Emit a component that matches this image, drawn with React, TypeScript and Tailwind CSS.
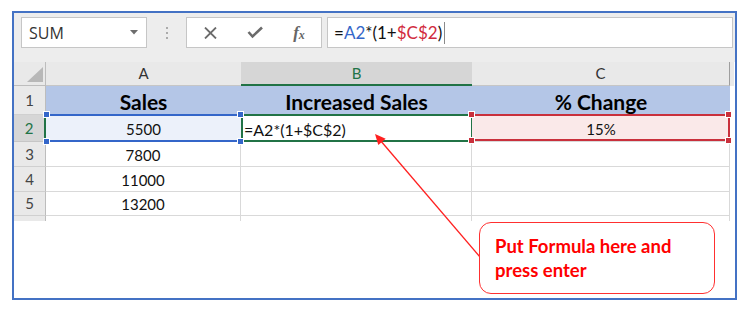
const GREEN = "#217346";

function Handle({ className }: { className: string }) {
  return <div className={`absolute z-10 w-[7px] h-[7px] border border-white ${className}`} />;
}

function RowHead({ n, active }: { n: string; active?: boolean }) {
  if (active) {
    return (
      <div className="w-[32px] shrink-0 flex items-center justify-center bg-[#d6d6d6] border-r-2 border-r-[#217346] border-b border-b-[#c6c6c6] text-[15px] text-[#217346]">
        {n}
      </div>
    );
  }
  return (
    <div className="w-[32px] shrink-0 flex items-center justify-center bg-[#e9e9e9] border-r border-r-[#bdbdbd] border-b border-b-[#d0d0d0] text-[15px] text-[#444]">
      {n}
    </div>
  );
}

function DataRow({ n, a, h }: { n: string; a: string; h: string }) {
  return (
    <div className={`flex ${h}`}>
      <RowHead n={n} />
      <div className="w-[195px] flex items-center justify-center pt-[2px] border-r border-b border-[#d9d9d9] text-[15px]">
        {a}
      </div>
      <div className="w-[231px] border-r border-b border-[#d9d9d9]" />
      <div className="w-[258px] border-r border-b border-[#d9d9d9]" />
    </div>
  );
}

export default function App() {
  return (
    <div className="relative w-[746px] h-[310px] bg-white pt-[11px] pl-[12px] font-[family-name:Lato,'Liberation_Sans',sans-serif] text-[#111]">
      <div className="w-[725px] h-[289px] border-2 border-[#4472c4] bg-white flex flex-col">
        {/* formula bar */}
        <div className="h-[49px] shrink-0 bg-[#ededed] flex items-start pt-[4px] pl-[7px] pr-[2px]">
          <div className="w-[126px] h-[31px] bg-white border border-[#c6c6c6] flex items-center justify-between pl-[7px] pr-[8px] font-[family-name:'Open_Sans',sans-serif] text-[16px] text-[#333]">
            <span>SUM</span>
            <svg width="8" height="5" viewBox="0 0 8 5">
              <path d="M0 0 L8 0 L4 4.5 Z" fill="#6d6d6d" />
            </svg>
          </div>
          <div className="w-[39px] h-[31px] flex flex-col items-center justify-center gap-[3px]">
            <span className="w-[2px] h-[2px] bg-[#ababab]" />
            <span className="w-[2px] h-[2px] bg-[#ababab]" />
            <span className="w-[2px] h-[2px] bg-[#ababab]" />
          </div>
          <div className="w-[136px] h-[31px] bg-white border border-[#c6c6c6] flex items-center">
            <div className="w-[46px] flex justify-center pl-[1px]">
              <svg width="13" height="12" viewBox="0 0 13 12">
                <path d="M1 0.5 L12 11.5 M12 0.5 L1 11.5" stroke="#6b6b6b" strokeWidth="1.8" />
              </svg>
            </div>
            <div className="w-[44px] flex justify-center">
              <svg width="16" height="13" viewBox="0 0 16 13">
                <path d="M1.5 6 L5.5 10.5 L15 1.5" stroke="#6b6b6b" strokeWidth="2.6" fill="none" />
              </svg>
            </div>
            <div className="w-[44px] flex justify-center font-[family-name:'Liberation_Serif',serif] italic font-bold text-[#666] text-[17px] leading-none">
              <span>f</span>
              <span className="text-[12px] mt-[5px]">x</span>
            </div>
          </div>
          <div className="ml-[5px] flex-1 h-[31px] bg-white border border-[#c6c6c6] flex items-center pl-[6px] text-[17px]">
            <span>=</span>
            <span className="text-[#3466c9]">A2</span>
            <span>*(1+</span>
            <span className="text-[#d12b3d]">$C$2</span>
            <span>)</span>
            <span className="ml-[2px] w-px h-[22px] bg-[#8a8a8a]" />
          </div>
        </div>

        {/* column headers */}
        <div className="flex h-[24px] text-[15px]">
          <div className="w-[32px] relative bg-[#e9e9e9] border-r border-b border-[#bdbdbd]">
            <svg className="absolute left-[13px] top-[5px]" width="16" height="15" viewBox="0 0 16 15">
              <path d="M16 0 L16 15 L0 15 Z" fill="#b8b8b8" />
            </svg>
          </div>
          <div className="w-[195px] flex items-center justify-center bg-[#e9e9e9] border-b border-b-[#c6c6c6] text-[#333]">A</div>
          <div className="w-[231px] flex items-center justify-center bg-[#d6d6d6] border-b-2 border-b-[#217346] text-[#217346]">B</div>
          <div className="w-[258px] flex items-center justify-center bg-[#e9e9e9] border-r border-r-[#9e9e9e] border-b border-b-[#c6c6c6] text-[#333]">C</div>
          <div className="w-[4px] bg-[#e9e9e9]" />
        </div>

        {/* row 1 */}
        <div className="flex h-[29px]">
          <RowHead n="1" />
          <div className="w-[684px] flex bg-[#b4c6e7] font-bold text-[21px] text-black">
            <div className="w-[195px] flex items-center justify-center pt-[2px]">Sales</div>
            <div className="w-[231px] flex items-center justify-center pt-[2px]">Increased Sales</div>
            <div className="w-[258px] flex items-center justify-center pt-[2px]">% Change</div>
          </div>
        </div>

        {/* row 2 */}
        <div className="flex h-[27px] text-[15px]">
          <RowHead n="2" active />
          <div className="relative w-[195px] flex items-center justify-center pt-[2px] bg-[#ecf1fa]">
            5500
            <div className="absolute left-0 right-0 top-[-1px] h-[2px] bg-[#3466c9]" />
            <div className="absolute left-0 right-0 bottom-0 h-[2px] bg-[#3466c9]" />
            <Handle className="bg-[#3466c9] left-[-3px] top-[-4px]" />
            <Handle className="bg-[#3466c9] left-[-3px] bottom-[-3px]" />
            <Handle className="bg-[#3466c9] right-[-3px] top-[-4px]" />
            <Handle className="bg-[#3466c9] right-[-3px] bottom-[-3px]" />
          </div>
          <div className="relative w-[231px] flex items-center pl-[3px] pt-[2px] bg-white text-[16px]">
            =A2*(1+$C$2)
            <div className="absolute top-[-1px] left-0 right-[-1px] bottom-0 border-2 border-[#217346]" style={{ borderColor: GREEN }} />
          </div>
          <div className="relative w-[258px] flex items-center justify-center pt-[2px] bg-[#fae9e9] border-b border-[#d9d9d9]">
            15%
            <div className="absolute left-0 right-0 top-[-1px] h-[2px] bg-[#c9303c]" />
            <div className="absolute left-0 right-0 bottom-0 h-[2px] bg-[#c9303c]" />
            <div className="absolute right-0 top-0 bottom-0 w-[2px] bg-[#c9303c]" />
            <Handle className="bg-[#c9303c] left-[-4px] top-[-4px]" />
            <Handle className="bg-[#c9303c] left-[-4px] bottom-[-3px]" />
            <Handle className="bg-[#c9303c] right-[-2px] top-[-4px]" />
            <Handle className="bg-[#c9303c] right-[-2px] bottom-[-3px]" />
          </div>
        </div>

        <DataRow n="3" a="7800" h="h-[25px]" />
        <DataRow n="4" a="11000" h="h-[25px]" />
        <DataRow n="5" a="13200" h="h-[24px]" />

        {/* partial row 6 */}
        <div className="flex h-[5px]">
          <div className="w-[32px] bg-[#e9e9e9] border-r border-[#bdbdbd]" />
          <div className="w-[195px] border-r border-[#d9d9d9]" />
          <div className="w-[231px] border-r border-[#d9d9d9]" />
          <div className="w-[258px] border-r border-[#d9d9d9]" />
        </div>
      </div>

      {/* annotation arrow */}
      <svg className="absolute inset-0 pointer-events-none" width="746" height="310" viewBox="0 0 746 310">
        <line x1="480" y1="257" x2="380" y2="140" stroke="#ff2020" strokeWidth="1.3" />
        <path d="M375 134 L378.3 145 L385.7 138.7 Z" fill="#ff2020" />
      </svg>

      {/* callout */}
      <div className="absolute left-[479px] top-[222px] w-[236px] h-[72px] rounded-[12px] border-[1.5px] border-[#ff3030] bg-white flex flex-col justify-center pl-[15px] text-[18.5px] leading-[24px] font-bold text-[#ff0000]">
        <span>Put Formula here and</span>
        <span>press enter</span>
      </div>
    </div>
  );
}
